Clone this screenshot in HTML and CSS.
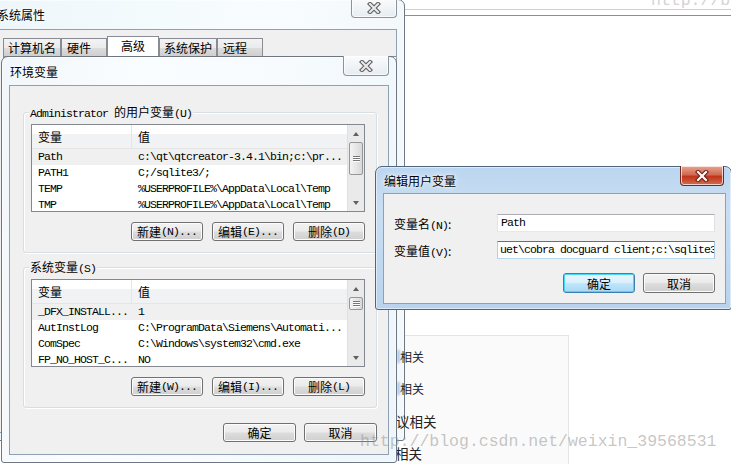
FILE: index.html
```html
<!DOCTYPE html>
<html lang="zh-CN">
<head>
<meta charset="utf-8">
<title>环境变量</title>
<link rel="stylesheet" href="styles.css">
</head>
<body>
<div class="desk">
  <div class="bg-rule"></div>
  <div class="bg-mark">http://bl</div>
  <div class="bg-panel">
    <div class="bg-row r1"><i class="blob"></i>相关</div>
    <div class="bg-row r2"><i class="blob"></i>相关</div>
    <div class="bg-row r3"><i class="blob"></i>议相关</div>
    <div class="bg-row r4">相关</div>
  </div>

  <section class="win win-sys">
    <header class="tbar"><span class="ttl">系统属性</span>
      <span class="close"><svg width="14" height="12" viewBox="0 0 14 12"><path d="M3 2 L11 10 M11 2 L3 10" stroke="#5a5a5a" stroke-width="4.2" stroke-linecap="square"/><path d="M3 2 L11 10 M11 2 L3 10" stroke="#e9e9e9" stroke-width="2.2" stroke-linecap="square"/></svg></span>
    </header>
    <div class="client sys-client">
      <div class="tabs">
        <span class="tab">计算机名</span>
        <span class="tab">硬件</span>
        <span class="tab tab-on">高级</span>
        <span class="tab">系统保护</span>
        <span class="tab">远程</span>
      </div>
      <div class="tabpanel"></div>
    </div>
  </section>

  <section class="win win-env">
    <header class="tbar"><span class="ttl">环境变量</span>
      <span class="close"><svg width="14" height="12" viewBox="0 0 14 12"><path d="M3 2 L11 10 M11 2 L3 10" stroke="#5a5a5a" stroke-width="4.2" stroke-linecap="square"/><path d="M3 2 L11 10 M11 2 L3 10" stroke="#e9e9e9" stroke-width="2.2" stroke-linecap="square"/></svg></span>
    </header>
    <div class="client env-client">
      <div class="group g1">
        <div class="legend"><span class="m">Administrator </span>的用户变量<span class="m">(U)</span></div>
        <div class="list">
          <div class="lv">
            <div class="lhead"><span class="c1">变量</span><span class="c2">值</span></div>
            <div class="lrow hot"><span class="c1 m">Path</span><span class="c2 m">c:\qt\qtcreator-3.4.1\bin;c:\pr...</span></div>
            <div class="lrow"><span class="c1 m">PATH1</span><span class="c2 m">C;/sqlite3/;</span></div>
            <div class="lrow"><span class="c1 m">TEMP</span><span class="c2 m">%USERPROFILE%\AppData\Local\Temp</span></div>
            <div class="lrow"><span class="c1 m">TMP</span><span class="c2 m">%USERPROFILE%\AppData\Local\Temp</span></div>
          </div>
          <div class="vsb">
            <span class="arr up"></span>
            <span class="thumb t1"><i></i><i></i><i></i></span>
            <span class="track"></span>
            <span class="arr dn"></span>
          </div>
        </div>
        <div class="btns">
          <span class="btn">新建<span class="m">(N)...</span></span>
          <span class="btn">编辑<span class="m">(E)...</span></span>
          <span class="btn">删除<span class="m">(D)</span></span>
        </div>
      </div>

      <div class="group g2">
        <div class="legend">系统变量<span class="m">(S)</span></div>
        <div class="list">
          <div class="lv">
            <div class="lhead"><span class="c1">变量</span><span class="c2">值</span></div>
            <div class="lrow hot"><span class="c1 m">_DFX_INSTALL...</span><span class="c2 m">1</span></div>
            <div class="lrow"><span class="c1 m">AutInstLog</span><span class="c2 m">C:\ProgramData\Siemens\Automati...</span></div>
            <div class="lrow"><span class="c1 m">ComSpec</span><span class="c2 m">C:\Windows\system32\cmd.exe</span></div>
            <div class="lrow"><span class="c1 m">FP_NO_HOST_C...</span><span class="c2 m">NO</span></div>
          </div>
          <div class="vsb">
            <span class="arr up"></span>
            <span class="thumb t2"><i></i><i></i><i></i></span>
            <span class="track"></span>
            <span class="arr dn"></span>
          </div>
        </div>
        <div class="btns">
          <span class="btn">新建<span class="m">(W)...</span></span>
          <span class="btn">编辑<span class="m">(I)...</span></span>
          <span class="btn">删除<span class="m">(L)</span></span>
        </div>
      </div>

      <div class="btns foot">
        <span class="btn">确定</span>
        <span class="btn">取消</span>
      </div>
    </div>
  </section>

  <section class="win win-edit">
    <header class="tbar"><span class="ttl">编辑用户变量</span>
      <span class="close red"><svg width="14" height="12" viewBox="0 0 14 12"><path d="M3 2 L11 10 M11 2 L3 10" stroke="#6b1a12" stroke-width="4.2" stroke-linecap="square"/><path d="M3 2 L11 10 M11 2 L3 10" stroke="#ffffff" stroke-width="2.2" stroke-linecap="square"/></svg></span>
    </header>
    <div class="client edit-client">
      <div class="field"><span class="lbl">变量名<span class="m">(N)</span>:</span><span class="inp m">Path</span></div>
      <div class="field"><span class="lbl">变量值<span class="m">(V)</span>:</span><span class="inp focus m">uet\cobra docguard client;c:\sqlite3</span></div>
      <div class="btns efoot">
        <span class="btn def">确定</span>
        <span class="btn">取消</span>
      </div>
    </div>
  </section>

  <div class="watermark">http://blog.csdn.net/weixin_39568531</div>
</div>
</body>
</html>
```

FILE: styles.css
```css
* { box-sizing: border-box; }
html, body { margin: 0; padding: 0; }
body {
  width: 731px;
  height: 464px;
  overflow: hidden;
  background: #ffffff;
  font-family: "Noto Sans CJK SC", "Liberation Sans", sans-serif;
  font-size: 12px;
  color: #000;
}
.desk {
  position: relative;
  width: 731px;
  height: 464px;
  overflow: hidden;
}
.m {
  font-family: "Liberation Mono", "Noto Sans CJK SC", monospace;
  font-size: 11.5px;
  letter-spacing: -0.9px;
}

/* background page */
.bg-rule {
  position: absolute;
  left: 400px; top: 9px;
  width: 331px; height: 7px;
  border-top: 1px solid #cfcfcf;
  border-bottom: 1px solid #8e8e8e;
}
.bg-mark {
  position: absolute;
  left: 651px; top: -9px;
  font-family: "Liberation Mono", monospace;
  font-size: 16.5px;
  color: #d4d4d4;
}
.bg-panel {
  position: absolute;
  left: 405px; top: 335px;
  width: 164px; height: 140px;
  background: #fafafa;
  border: 1px solid #e4e4e4;
  border-left: none;
  padding-top: 12px;
  display: flex;
  flex-direction: column;
  gap: 14px;
  z-index: 2;
}
.bg-row {
  position: relative;
  height: 18px;
  font-size: 12px;
  line-height: 18px;
  color: #222;
  white-space: nowrap;
}
.r1, .r2 { margin-left: -5px; }
.r3 { margin-left: -9px; font-size: 13.5px; }
.r4 { margin-left: -10px; font-size: 13.5px; }
.blob {
  position: absolute;
  left: -3px; top: 2px;
  width: 3px; height: 13px;
  background: #a9cbef;
  filter: blur(0.8px);
}

/* windows */
.win {
  position: absolute;
  display: flex;
  flex-direction: column;
  border: 1px solid #6d7681;
  border-radius: 7px 7px 3px 3px;
  padding: 0 7px 7px;
  box-shadow: 0 0 0 1px rgba(255,255,255,0.5) inset;
}
.tbar {
  position: relative;
  flex: none;
  display: flex;
  align-items: center;
}
.ttl {
  text-shadow: 0 0 6px #fff, 0 0 3px #fff;
}
.close {
  position: absolute;
  top: -1px;
  right: 0;
  display: flex;
  align-items: center;
  justify-content: center;
  border: 1px solid #8c939b;
  border-top: none;
  border-radius: 0 0 4px 4px;
  background: linear-gradient(#fafcfd, #e6ecf1);
  box-shadow: inset 0 0 0 1px rgba(255,255,255,0.7);
}
.close.red {
  border-color: #6d2a22;
  background: linear-gradient(#e8a493 0%, #d26a52 45%, #c1351a 55%, #d16b4f 100%);
}
.client {
  flex: 1;
  border: 1px solid #8fa0b3;
  background: #f0f0f0;
}

/* system properties */
.win-sys {
  left: -11px; top: -1px;
  width: 416px; height: 442px;
  background: linear-gradient(90deg, #edf6fa 0%, #f4fbfd 40%, #f8fcfe 70%, #f3f8fb 100%);
  z-index: 1;
}
.win-sys .tbar { height: 29px; }
.win-sys .close { width: 46px; height: 19px; right: 0; }
.sys-client {
  padding: 6px 0 0 5px;
  display: flex;
  flex-direction: column;
}
.tabs {
  display: flex;
  align-items: flex-end;
  height: 20px;
  position: relative;
  z-index: 1;
}
.tab {
  height: 18px;
  border: 1px solid #898c95;
  border-bottom: none;
  background: linear-gradient(#f3f3f3, #ebebeb 50%, #dddddd 51%, #cfcfcf);
  display: flex;
  align-items: center;
  justify-content: center;
  line-height: 16px;
  white-space: nowrap;
  flex: none;
}
.tab-on {
  height: 21px;
  margin-bottom: -1px;
  background: #fff;
  align-items: flex-start;
  padding-top: 1px;
}
.tabs .tab:nth-child(1) { width: 58px; }
.tabs .tab:nth-child(2) { width: 46px; justify-content: flex-start; padding-left: 5px; }
.tabs .tab:nth-child(3) { width: 52px; }
.tabs .tab:nth-child(4) { width: 58px; }
.tabs .tab:nth-child(5) { width: 46px; justify-content: flex-start; padding-left: 5px; }
.tabpanel {
  flex: 1;
  border: 1px solid #898c95;
  border-right: none;
  background: #fff;
}

/* environment variables */
.win-env {
  left: 1px; top: 56px;
  width: 396px; height: 407px;
  background: linear-gradient(100deg, #f1f6fa 0%, #fafdff 30%, #f7fbfe 60%, #eef6fb 100%);
  z-index: 3;
}
.win-env .tbar { height: 28px; }
.win-env .ttl { margin-left: 1px; }
.win-env .close { width: 46px; height: 20px; right: 0; }
.env-client {
  padding: 0 11px 0 13px;
  display: flex;
  flex-direction: column;
}
.group {
  border: 1px solid #d5dfe5;
  border-radius: 3px;
  box-shadow: inset 1px 1px 0 #fff, 1px 1px 0 #fff;
  padding: 0 11px 11px 7px;
  display: flex;
  flex-direction: column;
}
.g1 { margin-top: 26px; }
.g2 { margin-top: 14px; }
.legend {
  align-self: flex-start;
  margin: -8px 0 5px -2px;
  padding: 0 1px;
  height: 14px;
  line-height: 14px;
  background: #f0f0f0;
  white-space: nowrap;
}
.list {
  height: 88px;
  border: 1px solid #828790;
  background: #fff;
  display: flex;
  overflow: hidden;
}
.lv {
  flex: 1;
  overflow: hidden;
}
.lhead {
  height: 24px;
  display: flex;
  align-items: center;
  background: linear-gradient(#ffffff 0%, #ffffff 40%, #f1f2f4 41%, #f1f2f4 100%);
  border-bottom: 1px solid #e5e5e5;
}
.lhead .c1 { border-right: 1px solid #e3e5e8; height: 24px; display: flex; align-items: center; }
.c1 {
  width: 100px;
  padding-left: 6px;
  flex: none;
  white-space: nowrap;
}
.c2 {
  padding-left: 6px;
  white-space: nowrap;
}
.lrow {
  height: 16px;
  display: flex;
  align-items: center;
  line-height: 16px;
}
.lrow.hot { background: #f0f0f0; }
.vsb {
  width: 17px;
  flex: none;
  display: flex;
  flex-direction: column;
  background: #eaeaea;
  border-left: 1px solid #e0e0e0;
}
.arr {
  height: 17px;
  flex: none;
  display: flex;
  align-items: center;
  justify-content: center;
}
.arr::before {
  content: "";
  width: 0; height: 0;
  border-left: 3.5px solid transparent;
  border-right: 3.5px solid transparent;
}
.arr.up::before { border-bottom: 4px solid #606060; }
.arr.dn::before { border-top: 4px solid #606060; }
.thumb {
  flex: none;
  margin: 0 1px;
  border: 1px solid #979797;
  border-radius: 2px;
  background: linear-gradient(90deg, #f3f3f3, #e6e6e6 50%, #d8d8d8);
  display: flex;
  flex-direction: column;
  align-items: center;
  justify-content: center;
  gap: 1px;
}
.thumb i {
  width: 7px; height: 1px;
  background: #777;
  box-shadow: 0 1px 0 #fff;
}
.t1 { height: 33px; }
.t2 { height: 13px; }
.track { flex: 1; }
.btns {
  display: flex;
  justify-content: flex-end;
  gap: 9px;
  margin-top: 10px;
}
.btn {
  width: 72px;
  height: 19px;
  border: 1px solid #707070;
  border-radius: 3px;
  background: linear-gradient(#f2f2f2 0%, #ebebeb 48%, #dddddd 52%, #cfcfcf 100%);
  box-shadow: inset 0 0 0 1px #fcfcfc;
  display: flex;
  align-items: center;
  justify-content: center;
  line-height: 17px;
  white-space: nowrap;
}
.foot { margin-top: 15px; gap: 8px; }
.foot .btn { width: 73px; }

/* edit dialog */
.win-edit {
  left: 375px; top: 166px;
  width: 357px; height: 144px;
  padding: 0 5px 5px 7px;
  background: linear-gradient(180deg, #bcd6f0 0%, #c9def3 30%, #b9d3ee 100%);
  border-color: #4f6680;
  z-index: 4;
}
.win-edit .tbar { height: 26px; }
.win-edit .ttl { margin-left: 1px; }
.win-edit .close { width: 44px; height: 20px; right: 2px; }
.edit-client {
  padding: 20px 0 0 10px;
  display: flex;
  flex-direction: column;
  gap: 9px;
}
.field {
  display: flex;
  align-items: center;
  height: 18px;
}
.lbl { width: 103px; flex: none; white-space: nowrap; }
.inp {
  width: 218px;
  height: 18px;
  border: 1px solid #abadb3;
  border-color: #abadb3 #dbdfe6 #e3e9ef #e2e3ea;
  background: #fff;
  padding-left: 3px;
  line-height: 16px;
  white-space: nowrap;
  overflow: hidden;
}
.inp.focus {
  border-color: #3d7bad #a4c9e3 #b7d9ed #b5cfe7;
  padding-left: 2px;
}
.efoot { margin-top: 5px; margin-right: 10px; gap: 8px; }
.efoot .btn { height: 20px; }
.btn.def {
  border-color: #3c7fb1;
  background: linear-gradient(#eaf6fd 0%, #d9f0fc 48%, #bee6fd 52%, #a7d9f5 100%);
  box-shadow: inset 0 0 0 1px #48d8fb;
}

.watermark {
  position: absolute;
  left: 360px; top: 432px;
  font-family: "Liberation Mono", monospace;
  font-size: 16.5px;
  color: rgba(150,150,150,0.55);
  z-index: 5;
  white-space: nowrap;
}
```
